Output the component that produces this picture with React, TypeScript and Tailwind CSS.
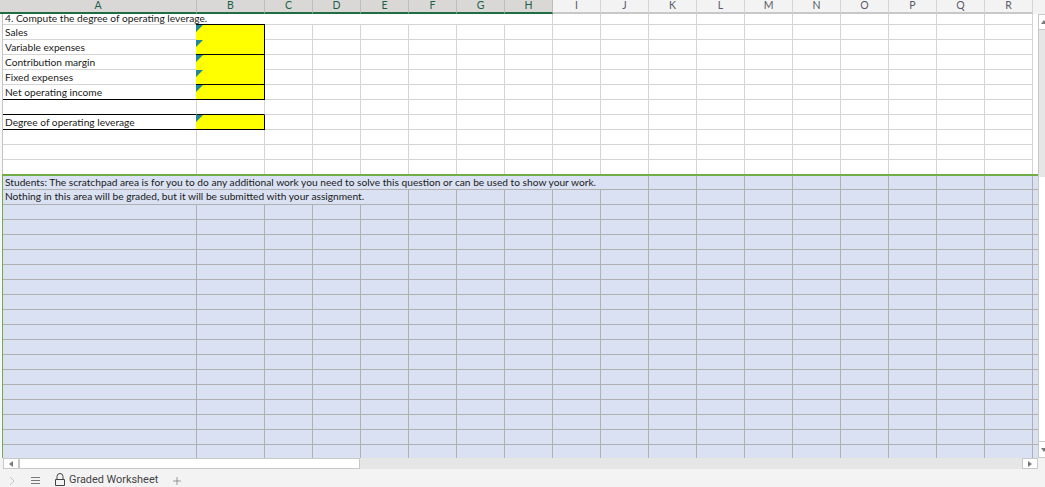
import React from 'react';
import { Plus } from 'lucide-react';

const COLS = ['C', 'D', 'E', 'F', 'G', 'H', 'I', 'J', 'K', 'L', 'M', 'N', 'O', 'P', 'Q', 'R'];
const ACTIVE = 6; // C..H have the selected header look

const GRID = 'border-[#d4d4d4]';
const BLUE = 'border-[#b0b0b0]';

const HeaderCell = ({ name, width, active }: { name: string; width: string; active: boolean }) => (
  <div
    className={`${width} shrink-0 border-b-2 border-r text-center text-[10.5px] leading-[11px] ${
      active
        ? 'border-r-[#bdbdbd] border-b-[#1f6e43] bg-[#d9d8d6] text-[#1f5f4a]'
        : 'border-r-[#d4d4d4] border-b-[#c8c8c8] bg-[#f3f3f3] text-[#5a5a6a]'
    }`}
  >
    {name}
  </div>
);

const Flag = () => (
  <span className="absolute left-0 top-0 h-[7px] w-[7px] bg-[#1f86a0] [clip-path:polygon(0_0,100%_0,0_100%)]" />
);

const Blank = ({ count, blue }: { count: number; blue?: boolean }) => (
  <>
    {Array.from({ length: count }).map((_, i) => (
      <div key={i} className={`w-[48px] shrink-0 border-b border-r ${blue ? BLUE : GRID}`} />
    ))}
  </>
);

type RowProps = {
  label?: string;
  yellow?: boolean;
  bLine?: boolean;
  aLine?: boolean;
  last?: boolean;
};

const DataRow = ({ label, yellow, bLine, aLine, last }: RowProps) => (
  <div className={`flex shrink-0 ${last ? 'h-[14px]' : 'h-[15px]'}`}>
    {yellow ? (
      <>
        <div className={`w-[193px] shrink-0 border-b pl-[2px] leading-[14px] ${aLine ? 'border-black' : GRID}`}>{label}</div>
        <div className={`relative w-[69px] shrink-0 border-r border-r-black bg-[#ffff00] ${bLine ? 'border-b border-b-black' : ''}`}>
          <Flag />
        </div>
      </>
    ) : (
      <>
        <div className={`w-[194px] shrink-0 border-r ${GRID} ${last ? '' : aLine ? 'border-b border-b-black' : 'border-b'}`} />
        <div className={`w-[68px] shrink-0 border-r ${GRID} ${last ? '' : aLine ? 'border-b border-b-black' : 'border-b'}`} />
      </>
    )}
    {COLS.map((c) => (
      <div key={c} className={`w-[48px] shrink-0 border-r ${GRID} ${last ? '' : 'border-b'}`} />
    ))}
  </div>
);

const BlueRow = ({ text, span, blanks, first }: { text?: string; span?: string; blanks?: number; first?: boolean }) => (
  <div className={`flex shrink-0 ${first ? 'h-[14px]' : 'h-[15px]'}`}>
    {text ? (
      <>
        <div className={`${span} shrink-0 whitespace-nowrap border-b border-r ${BLUE} pl-[2px] leading-[13px]`}>{text}</div>
        <Blank count={blanks ?? 0} blue />
      </>
    ) : (
      <>
        <div className={`w-[194px] shrink-0 border-b border-r ${BLUE}`} />
        <div className={`w-[68px] shrink-0 border-b border-r ${BLUE}`} />
        <Blank count={16} blue />
      </>
    )}
    <div className={`flex-1 border-b ${BLUE}`} />
  </div>
);

export default function App() {
  return (
    <div className="flex h-[487px] w-[1045px] flex-col overflow-hidden bg-[#f3f3f3] font-['Lato','Liberation_Sans',sans-serif] text-[10.2px] text-[#1a1a1a]">
      {/* column letters */}
      <div className="flex h-[14px] shrink-0">
        <HeaderCell name="A" width="w-[197px]" active />
        <HeaderCell name="B" width="w-[68px]" active />
        {COLS.map((c, i) => (
          <HeaderCell key={c} name={c} width="w-[48px]" active={i < ACTIVE} />
        ))}
      </div>

      <div className="flex min-h-0 flex-1 bg-[#f8f8f8]">
        <div className="ml-[2px] flex w-[1036px] shrink-0 flex-col bg-white">
          <div className="flex shrink-0 flex-col border-l border-[#c4c4c4]">
            <div className="flex h-[11px] shrink-0">
              <div className={`relative z-10 w-[193px] shrink-0 whitespace-nowrap border-b ${GRID} pl-[2px] leading-[8px]`}>
                4. Compute the degree of operating leverage.
              </div>
              <div className="w-[69px] shrink-0 border-b border-black" />
              <div className={`w-[288px] shrink-0 border-b border-r ${GRID}`} />
              <Blank count={10} />
            </div>
            <DataRow label="Sales" yellow />
            <DataRow label="Variable expenses" yellow bLine />
            <DataRow label="Contribution margin" yellow />
            <DataRow label="Fixed expenses" yellow bLine />
            <DataRow label="Net operating income" yellow bLine aLine />
            <DataRow aLine />
            <DataRow label="Degree of operating leverage" yellow bLine aLine />
            <DataRow />
            <DataRow />
            <DataRow last />
          </div>
          <div className="h-[2px] shrink-0 bg-[#70ad47]" />
          <div className="flex min-h-0 flex-1 flex-col overflow-hidden border-l border-[#70ad47] bg-[#d9e1f2]">
            <BlueRow
              first
              span="w-[646px]"
              blanks={8}
              text="Students: The scratchpad area is for you to do any additional work you need to solve this question or can be used to show your work."
            />
            <BlueRow
              span="w-[406px]"
              blanks={13}
              text="Nothing in this area will be graded, but it will be submitted with your assignment."
            />
            {Array.from({ length: 17 }).map((_, i) => (
              <BlueRow key={i} />
            ))}
          </div>
        </div>

        {/* vertical scrollbar */}
        <div className="flex w-[7px] shrink-0 flex-col overflow-hidden border-l border-[#c8c8c8]">
          <div className="flex h-[16px] shrink-0 items-center border-y border-[#c8c8c8] bg-white pl-[2px]">
            <span className="h-0 w-0 shrink-0 border-x-[3px] border-b-[4px] border-x-transparent border-b-[#7a7a7a]" />
          </div>
          <div className="h-[147px] shrink-0 bg-[#e6e6e6]" />
          <div className="flex-1 bg-white" />
          <div className="flex h-[17px] shrink-0 items-center border-y border-[#c8c8c8] bg-white pl-[2px]">
            <span className="h-0 w-0 shrink-0 border-x-[3px] border-t-[4px] border-x-transparent border-t-[#7a7a7a]" />
          </div>
        </div>
      </div>

      {/* horizontal scrollbar */}
      <div className="flex h-[11px] shrink-0 pl-[3px] pr-[7px]">
        <div className="flex flex-1 bg-[#e6e6e6]">
          <div className="flex w-[357px] border border-[#c8c8c8] bg-white">
            <div className="flex w-[16px] items-center justify-center border-r-2 border-[#c8c8c8]">
              <span className="h-0 w-0 border-y-[3px] border-r-[4px] border-y-transparent border-r-[#7a7a7a]" />
            </div>
          </div>
          <div className="flex-1" />
          <div className="flex w-[16px] items-center justify-center border border-[#c8c8c8] bg-white">
            <span className="h-0 w-0 border-y-[3px] border-l-[4px] border-y-transparent border-l-[#7a7a7a]" />
          </div>
        </div>
      </div>

      {/* sheet tabs */}
      <div className="flex h-[18px] shrink-0 items-center pl-[9px] pt-[5px] font-['Roboto',sans-serif] text-[10.9px] text-[#444]">
        <svg width="6" height="10" viewBox="0 0 6 10" fill="none" stroke="#c4c4c4">
          <path d="M1 1l4 4-4 4" />
        </svg>
        <svg className="ml-[16px]" width="9" height="8" viewBox="0 0 9 8" fill="none" stroke="#777">
          <path d="M0 .5h9M0 3.500h9M0 6.500h9" />
        </svg>
        <svg className="ml-[15px] mb-[2px]" width="10" height="13" viewBox="0 0 10 13" fill="none" stroke="#444">
          <path d="M.5 6.500h9v6h-9zM2 6.500V3.500a3 3 0 0 1 6 0v3" />
        </svg>
        <span className="ml-[4px]">Graded Worksheet</span>
        <Plus className="ml-[13px]" size={12} strokeWidth={1.3} color="#666" />
      </div>
    </div>
  );
}
